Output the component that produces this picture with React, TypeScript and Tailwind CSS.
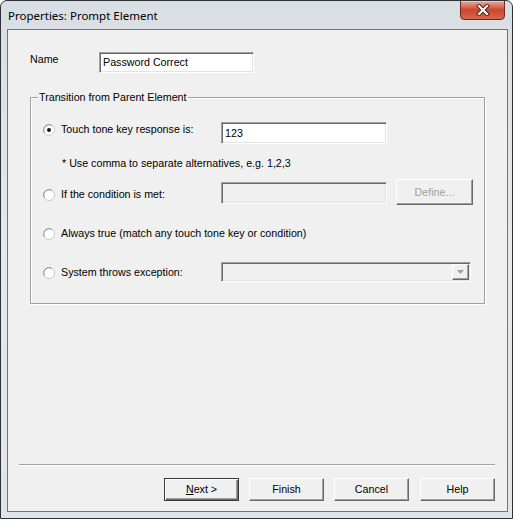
import type { ReactNode } from 'react';

function Radio({ checked }: { checked?: boolean }) {
    return (
        <svg width="12" height="12" viewBox="0 0 12 12" className="shrink-0">
            <circle cx="6" cy="6" r="5.5" fill="#ffffff" stroke="#c9c9c9" />
            <path d="M1.3 8.6 A5.4 5.4 0 0 1 8.6 1.3" fill="none" stroke="#8d8d8d" />
            {checked && <circle cx="6" cy="6" r="2" fill="#151515" />}
        </svg>
    );
}

function Button({ children, primary, disabled, wide }: { children: ReactNode; primary?: boolean; disabled?: boolean; wide?: boolean }) {
    return (
        <div
            className={`flex shrink-0 items-center justify-center bg-[#f0f0f0] ${wide ? 'h-[26px] w-[77px]' : 'h-[23px] w-[75px]'} ${
                primary
                    ? 'border border-[#3a3a3a] shadow-[inset_1px_1px_0_#ffffff,inset_-1px_-1px_0_#696969,inset_-2px_-2px_0_#a0a0a0]'
                    : 'border border-t-white border-l-white border-r-[#696969] border-b-[#696969] shadow-[inset_-1px_-1px_0_#a0a0a0]'
            } ${disabled ? 'text-[#a0a0a0]' : 'text-black'}`}
        >
            {children}
        </div>
    );
}

const sunken =
    'border border-t-[#a0a0a0] border-l-[#a0a0a0] border-b-white border-r-white shadow-[inset_1px_1px_0_#696969,inset_-1px_-1px_0_#e3e3e3]';

export default function App() {
    return (
        <div className="flex h-[519px] w-[513px] flex-col overflow-hidden rounded-t-[7px] border border-[#2e3338] bg-gradient-to-b from-[#d9dee4] via-[#e6e9ec] to-[#e2e5e8] font-['Liberation_Sans',Arial,sans-serif] text-[10.7px] leading-[13px] text-black">
            {/* title bar */}
            <div className="flex h-[28px] shrink-0 items-start justify-between">
                <div className="pl-[7px] pt-[7px] font-['Noto_Sans',sans-serif] text-[11.5px] leading-[15px] text-black">
                    Properties: Prompt Element
                </div>
                <div className="-mt-px mr-[7px] flex h-[20px] w-[45px] items-center justify-center rounded-b-[4px] border border-[#6e2a20] bg-gradient-to-b from-[#e9a99c] via-[#c9452f] to-[#d9674c] shadow-[inset_0_1px_0_#f3c7bd]">
                    <svg width="16" height="12" viewBox="0 0 16 12">
                        <path d="M4 2 L12 10 M12 2 L4 10" stroke="#4a1a12" strokeWidth="4" strokeLinecap="square" />
                        <path d="M4 2 L12 10 M12 2 L4 10" stroke="#ffffff" strokeWidth="2.2" strokeLinecap="square" />
                    </svg>
                </div>
            </div>

            {/* client area */}
            <div className="ml-[6px] mr-[4px] mb-[6px] flex flex-1 flex-col border border-[#737373] bg-[#f0f0f0]">
                <div className="flex pl-[22px] pt-[22px]">
                    <div className="w-[69px] pt-px">Name</div>
                    <div className={`flex h-[21px] w-[155px] items-center bg-white pl-[3px] ${sunken}`}>Password Correct</div>
                </div>

                <div className="relative mx-[22px] mt-[24px] h-[207px] border border-[#a0a0a0] shadow-[1px_1px_0_#ffffff,inset_1px_1px_0_#ffffff]">
                    <span className="absolute -top-[7px] left-[7px] bg-[#f0f0f0] px-px">Transition from Parent Element</span>

                    <div className="flex flex-col pl-[12px]">
                        <div className="mt-[24px] flex items-start">
                            <div className="mt-px flex h-[13px] w-[178px] items-center gap-[6px]">
                                <Radio checked />
                                <span>Touch tone key response is:</span>
                            </div>
                            <div className={`flex h-[22px] w-[166px] items-center bg-white pl-[3px] ${sunken}`}>123</div>
                        </div>

                        <div className="mt-[13px] ml-[19px] h-[13px]">* Use comma to separate alternatives, e.g. 1,2,3</div>

                        <div className="mt-[9px] flex items-start">
                            <div className="mt-[9px] flex h-[13px] w-[178px] items-center gap-[6px]">
                                <Radio />
                                <span>If the condition is met:</span>
                            </div>
                            <div className={`mt-[3px] h-[22px] w-[166px] bg-[#f0f0f0] ${sunken}`} />
                            <div className="ml-[9px]">
                                <Button wide disabled>
                                    Define...
                                </Button>
                            </div>
                        </div>

                        <div className="mt-[22px] flex h-[13px] items-center gap-[6px]">
                            <Radio />
                            <span>Always true (match any touch tone key or condition)</span>
                        </div>

                        <div className="mt-[22px] flex items-start">
                            <div className="mt-[4px] flex h-[13px] w-[178px] items-center gap-[6px]">
                                <Radio />
                                <span>System throws exception:</span>
                            </div>
                            <div className={`flex h-[20px] w-[250px] justify-end bg-[#f0f0f0] p-px ${sunken}`}>
                                <div className="flex h-[16px] w-[17px] items-center justify-center border border-t-white border-l-white border-r-[#696969] border-b-[#696969] bg-[#f0f0f0] shadow-[inset_-1px_-1px_0_#a0a0a0]">
                                    <svg width="7" height="4" viewBox="0 0 7 4">
                                        <path d="M0 0 H7 L3.5 4 Z" fill="#a0a0a0" />
                                    </svg>
                                </div>
                            </div>
                        </div>
                    </div>
                </div>

                <div className="mt-auto ml-[11px] mr-[12px] border-t border-b border-t-[#a0a0a0] border-b-white" />

                <div className="mt-[12px] mb-[10px] flex justify-end gap-[10px] pr-[12px]">
                    <Button primary>
                        <span>
                            <span className="underline">N</span>ext &gt;
                        </span>
                    </Button>
                    <Button>Finish</Button>
                    <Button>Cancel</Button>
                    <div className="ml-px">
                        <Button>Help</Button>
                    </div>
                </div>
            </div>
        </div>
    );
}
